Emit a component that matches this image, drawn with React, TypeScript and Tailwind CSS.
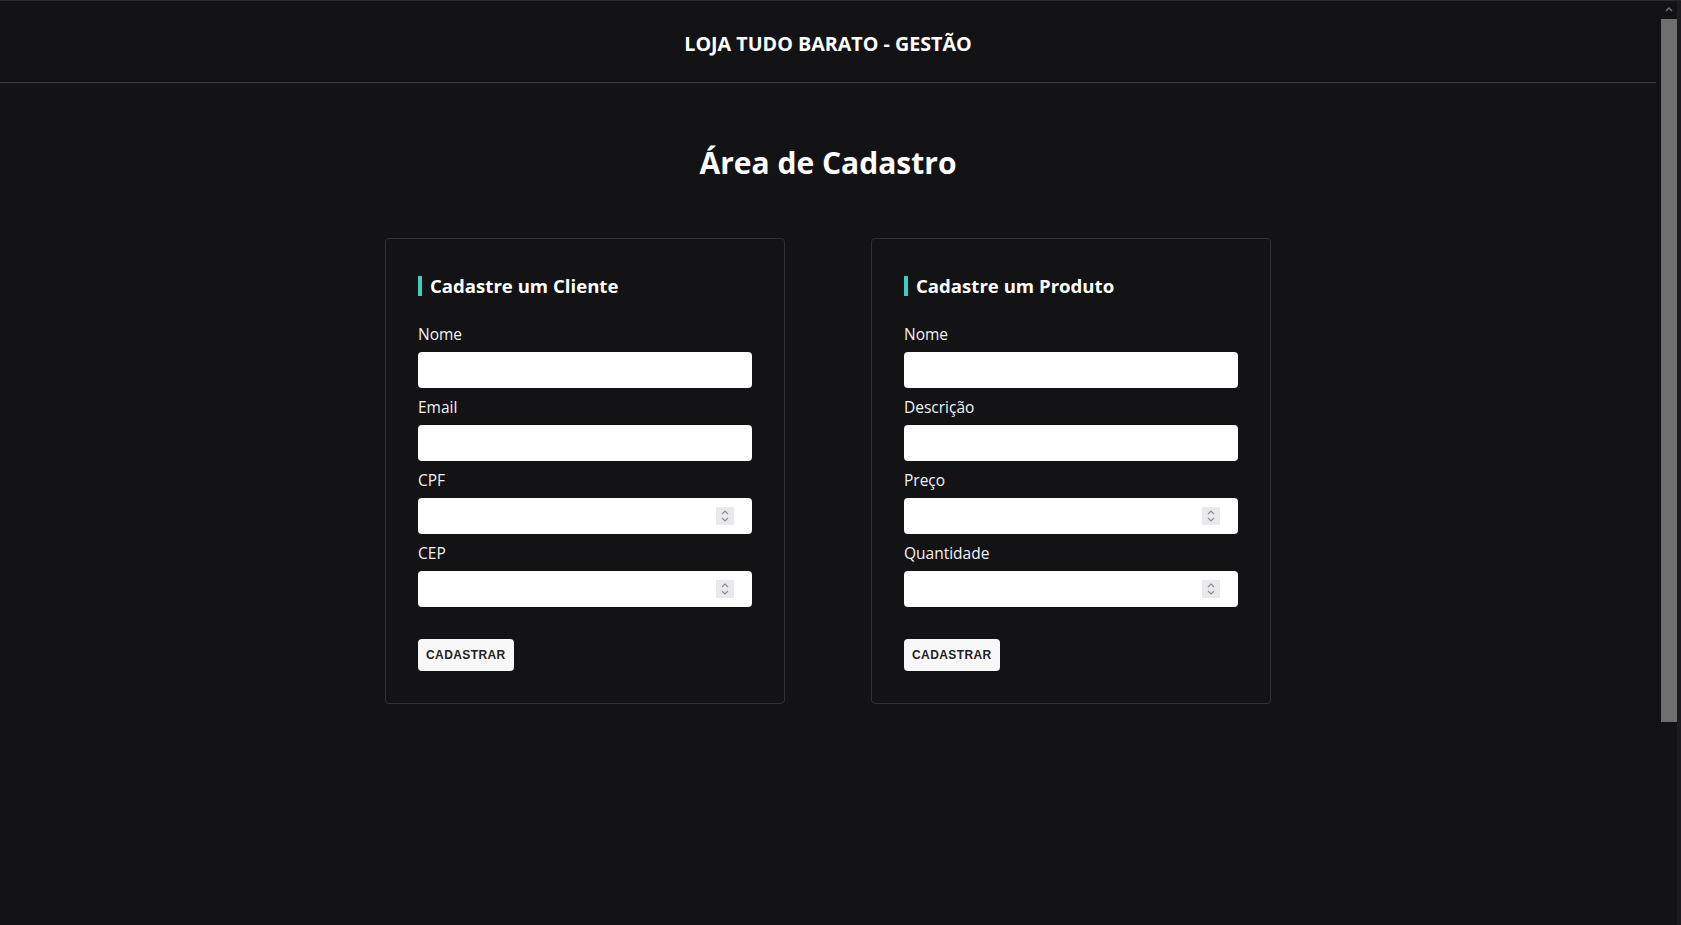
import React from "react";

type Field = { label: string; numeric?: boolean };

const clienteFields: Field[] = [
  { label: "Nome" },
  { label: "Email" },
  { label: "CPF", numeric: true },
  { label: "CEP", numeric: true },
];

const produtoFields: Field[] = [
  { label: "Nome" },
  { label: "Descrição" },
  { label: "Preço", numeric: true },
  { label: "Quantidade", numeric: true },
];

function Spinner() {
  return (
    <span className="w-[18px] h-[18px] bg-[#e9e9ed] flex items-center justify-center shrink-0">
      <svg width="10" height="14" viewBox="0 0 10 14" fill="none">
        <path d="M2 5 L5 2 L8 5" stroke="#8d8d93" strokeWidth="1.2" />
        <path d="M2 9 L5 12 L8 9" stroke="#8d8d93" strokeWidth="1.2" />
      </svg>
    </span>
  );
}

function FormCard({ title, fields }: { title: string; fields: Field[] }) {
  return (
    <div className="w-[400px] border border-[#303034] rounded-[4px] p-8">
      <h2 className="flex items-center gap-2 text-[18.6px] leading-[28px] font-bold text-white mt-[1px] mb-[23px]">
        <span className="w-1 h-5 bg-[#3ccfbf]" />
        {title}
      </h2>

      {fields.map((f) => (
        <div key={f.label}>
          <label className="block text-[15.5px] leading-[23px] text-[#f2f2f2] mb-[6px]">
            {f.label}
          </label>
          <div className="h-9 bg-white rounded-[4px] flex items-center pr-[18px] mb-2">
            <input
              type="text"
              className="flex-1 h-full px-3 bg-transparent outline-none text-black"
            />
            {f.numeric && <Spinner />}
          </div>
        </div>
      ))}

      <button
        type="button"
        className="mt-6 h-8 px-2 bg-[#f8f8f8] rounded-[4px] text-[12px] tracking-[0.4px] font-bold text-[#222] font-['Liberation_Sans',Arial,sans-serif]"
      >
        CADASTRAR
      </button>
    </div>
  );
}

export default function App() {
  return (
    <div className="h-screen flex bg-[#131315] font-['Open_Sans',sans-serif] overflow-hidden">
      <div className="flex-1 flex flex-col">
        <header className="border-t border-b border-t-[#2a2a2e] border-b-[#3a3a3c] pt-[29px] pb-[24px] text-center">
          <h1 className="text-[19.7px] leading-[28px] font-bold text-white">
            LOJA TUDO BARATO - GESTÃO
          </h1>
        </header>

        <main className="flex flex-col items-center">
          <h2 className="mt-[62px] text-[30px] leading-[36px] font-bold text-white">
            Área de Cadastro
          </h2>

          <div className="mt-[57px] flex gap-[86px]">
            <FormCard title="Cadastre um Cliente" fields={clienteFields} />
            <FormCard title="Cadastre um Produto" fields={produtoFields} />
          </div>
        </main>
      </div>

      <div className="w-[25px] flex border-t border-[#2a2a2e]">
        <div className="w-[5px]" />
        <div className="w-4 flex flex-col items-center">
          <svg width="10" height="10" viewBox="0 0 10 10" className="mt-[3px]">
            <path d="M2 7 L5 4 L8 7" stroke="#6f6f6f" strokeWidth="1.5" fill="none" />
          </svg>
          <div className="w-4 h-[703px] bg-[#6f6f6f] mt-[5px]" />
        </div>
        <div className="w-1 bg-[#1c1c1f]" />
      </div>
    </div>
  );
}
